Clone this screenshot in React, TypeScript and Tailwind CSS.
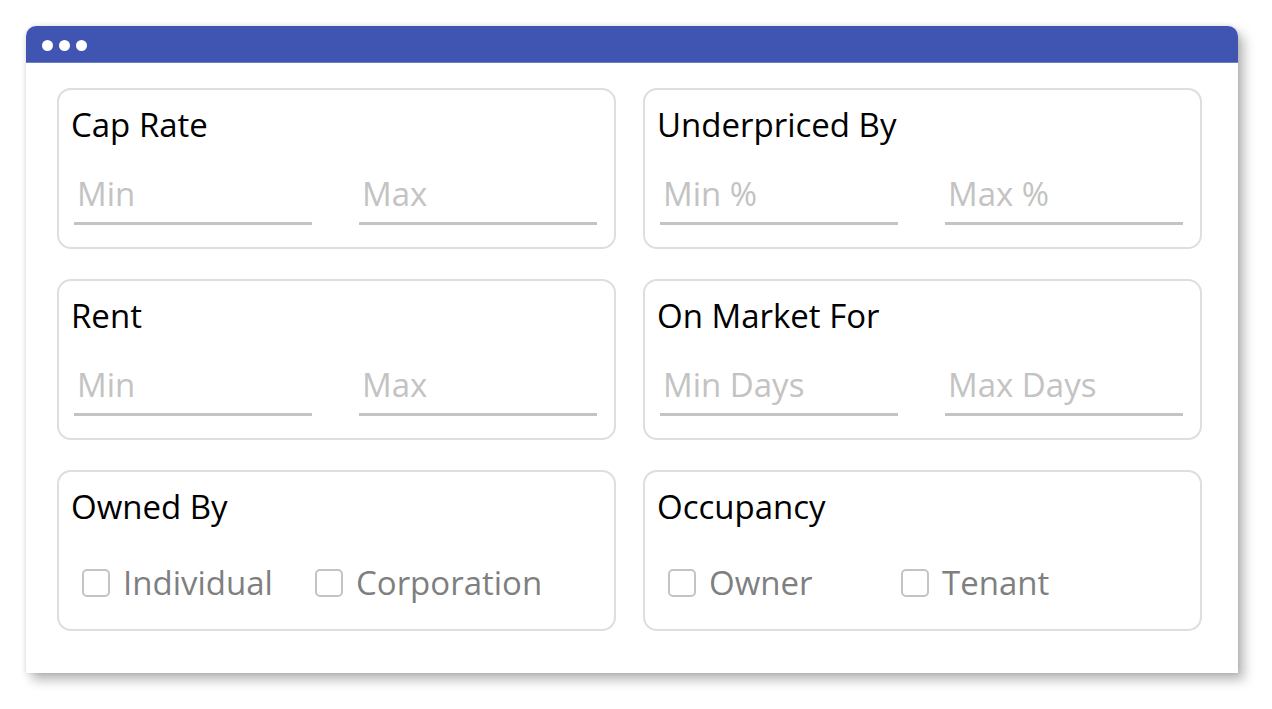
import { useState } from "react";

const font = { fontFamily: '"Open Sans", "Noto Sans", sans-serif' };

function RangeCard({ title, min, max }: { title: string; min: string; max: string }) {
    return (
        <div className="h-[161px] rounded-[14px] border-2 border-[#dedede] bg-white pt-[15px] px-[15px]">
            <h3 className="text-[33px] leading-[40px] text-black ml-[-3px]">{title}</h3>
            <div className="mt-[29px] flex gap-[47px]">
                {[min, max].map((p) => (
                    <input
                        key={p}
                        placeholder={p}
                        className="w-[238px] h-[51px] pl-[3px] pb-[9px] text-[33px] leading-[40px] border-b-[3px] border-[#c4c4c4] outline-none placeholder:text-[#c3c3c3] bg-transparent"
                        style={font}
                    />
                ))}
            </div>
        </div>
    );
}

function CheckCard({ title, options }: { title: string; options: string[] }) {
    const [checked, setChecked] = useState<string[]>([]);
    const toggle = (o: string) => {
        setChecked((c) => (c.includes(o) ? c.filter((x) => x !== o) : [...c, o]));
    };
    return (
        <div className="h-[161px] rounded-[14px] border-2 border-[#dedede] bg-white pt-[15px] px-[15px]">
            <h3 className="text-[33px] leading-[40px] text-black ml-[-3px]">{title}</h3>
            <div className="mt-[36px] flex pl-[8px]">
                {options.map((o) => (
                    <label key={o} onClick={() => toggle(o)} className="w-[233px] flex items-center gap-[13px] cursor-pointer select-none">
                        <span className={"w-[28px] h-[28px] rounded-[5px] border-2 border-[#c4c4c4] " + (checked.includes(o) ? "bg-[#3f55b1]" : "bg-white")}></span>
                        <span className="text-[33px] leading-[40px] text-[#7f7f7f]">{o}</span>
                    </label>
                ))}
            </div>
        </div>
    );
}

export default function App() {
    return (
        <main className="w-[1272px] h-[709px] bg-white pt-[26px] pl-[26px]" style={font}>
            <div className="w-[1212px] h-[647px] bg-white rounded-t-[10px] shadow-[0_0_5px_rgba(0,0,0,0.12),6px_7px_12px_rgba(0,0,0,0.28)]">
                {/* title bar */}
                <div className="h-[37px] rounded-t-[10px] bg-[#3f55b1] border-b border-[#6a7ec6] flex items-center gap-[6px] pl-[16px] pt-[3px]">
                    <span className="w-[11px] h-[11px] rounded-full bg-white"></span>
                    <span className="w-[11px] h-[11px] rounded-full bg-white"></span>
                    <span className="w-[11px] h-[11px] rounded-full bg-white"></span>
                </div>
                <div className="pt-[25px] pl-[31px] pr-[36px] grid grid-cols-[559px_559px] gap-x-[27px] gap-y-[30px]">
                    <RangeCard title="Cap Rate" min="Min" max="Max" />
                    <RangeCard title="Underpriced By" min="Min %" max="Max %" />
                    <RangeCard title="Rent" min="Min" max="Max" />
                    <RangeCard title="On Market For" min="Min Days" max="Max Days" />
                    <CheckCard title="Owned By" options={["Individual", "Corporation"]} />
                    <CheckCard title="Occupancy" options={["Owner", "Tenant"]} />
                </div>
            </div>
        </main>
    );
}
